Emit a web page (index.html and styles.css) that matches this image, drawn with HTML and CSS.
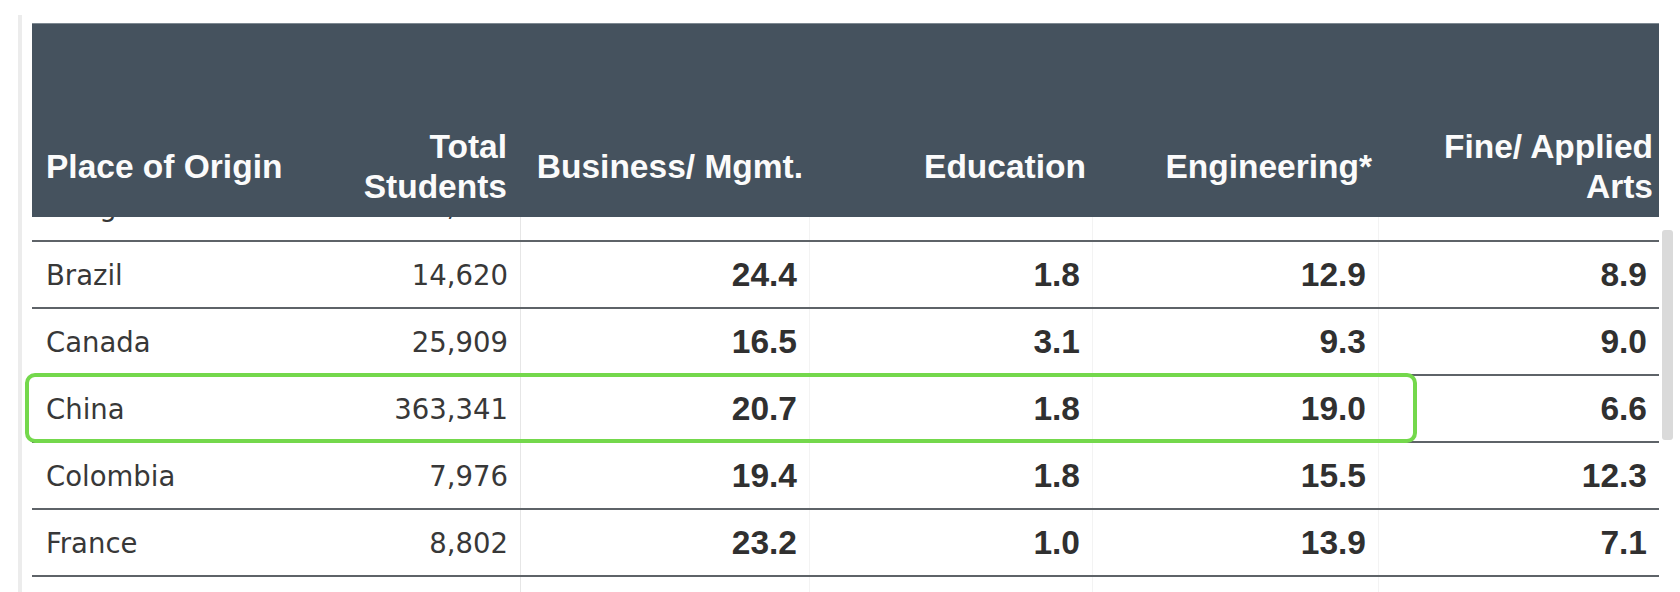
FILE: index.html
```html
<!DOCTYPE html>
<html lang="en">
<head>
<meta charset="utf-8">
<title>Fields of Study by Place of Origin</title>
<link rel="stylesheet" href="styles.css">
</head>
<body>
<div class="panel">
  <div class="table">
    <div class="grid thead">
      <div class="th first"><div class="hd">Place of Origin</div></div>
      <div class="th total"><div class="hd">Total<br>Students</div></div>
      <div class="th"><div class="hd">Business/ Mgmt.</div></div>
      <div class="th"><div class="hd">Education</div></div>
      <div class="th"><div class="hd">Engineering*</div></div>
      <div class="th"><div class="hd">Fine/ Applied<br>Arts</div></div>
    </div>
    <div class="tbody">
      <div class="rows">
        <div class="grid tr peek">
          <div class="td name">Bangladesh</div><div class="td num">7,143</div>
          <div class="td val c3">5.5</div><div class="td val">1.2</div><div class="td val">9.6</div><div class="td val">2.2</div>
        </div>
        <div class="grid tr">
          <div class="td name">Brazil</div><div class="td num">14,620</div>
          <div class="td val c3">24.4</div><div class="td val">1.8</div><div class="td val">12.9</div><div class="td val">8.9</div>
        </div>
        <div class="grid tr">
          <div class="td name">Canada</div><div class="td num">25,909</div>
          <div class="td val c3">16.5</div><div class="td val">3.1</div><div class="td val">9.3</div><div class="td val">9.0</div>
        </div>
        <div class="grid tr">
          <div class="td name">China</div><div class="td num">363,341</div>
          <div class="td val c3">20.7</div><div class="td val">1.8</div><div class="td val">19.0</div><div class="td val">6.6</div>
        </div>
        <div class="grid tr">
          <div class="td name">Colombia</div><div class="td num">7,976</div>
          <div class="td val c3">19.4</div><div class="td val">1.8</div><div class="td val">15.5</div><div class="td val">12.3</div>
        </div>
        <div class="grid tr">
          <div class="td name">France</div><div class="td num">8,802</div>
          <div class="td val c3">23.2</div><div class="td val">1.0</div><div class="td val">13.9</div><div class="td val">7.1</div>
        </div>
        <div class="grid tr">
          <div class="td name">Germany</div><div class="td num">10,145</div>
          <div class="td val c3">18.6</div><div class="td val">1.4</div><div class="td val">14.2</div><div class="td val">6.1</div>
        </div>
      </div>
    </div>
  </div>
  <div class="track"><div class="thumb"></div></div>
  <div class="highlight"></div>
</div>
</body>
</html>
```

FILE: styles.css
```css
* { box-sizing: border-box; }

html, body {
  margin: 0;
  background: #ffffff;
  width: 1680px;
  height: 592px;
  overflow: hidden;
}

.panel {
  position: relative;
  display: flex;
  margin: 15px 0 0 18px;
  padding: 8px 0 0 10px;
  border-left: 4px solid #ececec;
  height: 577px;
}

.table {
  flex: none;
  width: 1627px;
  display: flex;
  flex-direction: column;
}

.grid {
  display: grid;
  grid-template-columns: 348px 140px 289px 283px 286px 281px;
}

.thead {
  flex: none;
  height: 194px;
  background: #45525e;
  border-top: 1px solid #7d8891;
  color: #fbfbfb;
  font: bold 33.5px "Liberation Sans", Arial, Helvetica, sans-serif;
  align-items: end;
}

.th {
  padding: 0 6px 10.5px 0;
}

.th .hd {
  height: 80px;
  line-height: 40px;
  display: flex;
  align-items: center;
  justify-content: flex-end;
  text-align: right;
  white-space: nowrap;
}

.th.first { padding-left: 14px; }
.th.first .hd { justify-content: flex-start; text-align: left; }
.th.total { padding-right: 13px; }

.tbody {
  flex: 1;
  overflow: hidden;
}

.rows {
  margin-top: -42px;
}

.tr {
  height: 67px;
  border-bottom: 2px solid #5e6368;
}

.td {
  display: flex;
  align-items: center;
  justify-content: flex-end;
  padding-right: 12px;
  color: #333333;
  white-space: nowrap;
}

.tr.peek .td {
  padding-bottom: 4px;
}

.td.name {
  justify-content: flex-start;
  padding-left: 14px;
  font: 27.5px "DejaVu Sans", Verdana, sans-serif;
  color: #383838;
}

.td.num {
  font: 27.5px "DejaVu Sans", Verdana, sans-serif;
  color: #383838;
}

.td.val {
  font: bold 33.5px "Liberation Sans", Arial, Helvetica, sans-serif;
  color: #303030;
  border-left: 1px solid #f3f3f3;
}

.td.val.c3 { border-left-color: #e6e6e6; }

.track {
  flex: none;
  width: 21px;
  padding: 207px 0 0 3px;
}

.thumb {
  width: 11px;
  height: 210px;
  background: #dadada;
  border-radius: 3px;
}

.highlight {
  position: absolute;
  left: 3px;
  top: 358px;
  width: 1392px;
  height: 70px;
  border: 4px solid #74d84c;
  border-radius: 10px;
  pointer-events: none;
}
```
